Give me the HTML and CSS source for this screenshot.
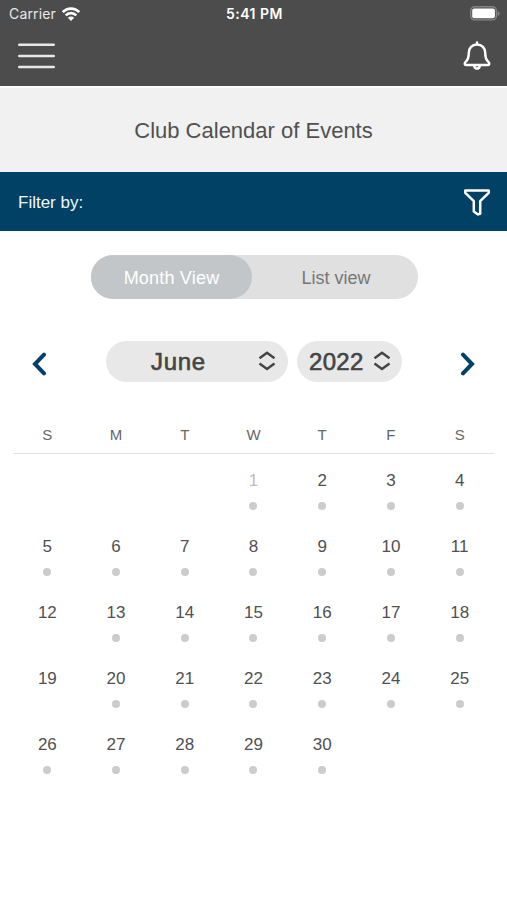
FILE: index.html
```html
<!DOCTYPE html>
<html lang="en">
<head>
<meta charset="utf-8">
<title>Club Calendar of Events</title>
<link rel="stylesheet" href="styles.css">
</head>
<body>
<header class="top">
  <div class="status">
    <div class="carrier"><span class="carrier-name">Carrier</span>
      <svg width="18" height="14" viewBox="0 0 18 14" fill="none" stroke="#fff" stroke-width="2.7"><path d="M.8 5.200C5.300.4 12.700.4 17.200 5.200M3.700 8.400c3-3 7.600-3 10.600 0"/><path d="M9 14 5.900 10.700c1.800-1.600 4.400-1.600 6.200 0z" fill="#fff" stroke="none"/></svg>
    </div>
    <div class="time">5:41 PM</div>
    <div class="battery">
      <svg width="31" height="15" viewBox="0 0 31 15"><rect x="1.700" y=".7" width="25.700" height="13.200" rx="4" fill="none" stroke="#858585" stroke-width="1.400"/><rect x="3.200" y="2.400" width="22.700" height="9.800" rx="2" fill="#fff"/><path d="M28.700 5v5q2-1 2-2.500T28.700 5z" fill="#858585"/></svg>
    </div>
  </div>
  <div class="nav">
    <svg width="37" height="28" viewBox="0 0 37 28" stroke="#e8e8e8" stroke-width="2.600" stroke-linecap="round"><path d="M1.300 2.800h34.400M1.300 14h34.400M1.300 25h34.400"/></svg>
    <svg width="28" height="30" viewBox="0 0 28 30" fill="none" stroke="#fff" stroke-width="2.500" stroke-linejoin="round" stroke-linecap="round"><path d="M14 1.400v2M14 3.400c-5 0-8.200 3.600-8.200 8.300 0 5.400-1 7.300-3.200 9.200-1.500 1.500-1 3.200.9 3.200h21c1.900 0 2.400-1.700.9-3.200-2.200-1.900-3.200-3.800-3.200-9.200 0-4.700-3.200-8.300-8.200-8.300zM11.200 24.600c.3 4 5.300 4 5.600 0"/></svg>
  </div>
</header>
<h1 class="title">Club Calendar of Events</h1>
<div class="filter">
  <span class="filter-label">Filter by:</span>
  <svg width="26" height="27" viewBox="0 0 26 27" fill="none" stroke="#fff" stroke-width="2.500" stroke-linejoin="round"><path d="M1.300 1.500h23.400v2.300l-8.500 8.400v12.600l-2.200.6-4.200-3V12.200L1.300 3.800z"/></svg>
</div>
<main>
  <div class="tabs"><div class="tab active">Month View</div><div class="tab">List view</div></div>
  <div class="picker">
    <svg class="arrow" width="16" height="24" viewBox="0 0 16 24"><path d="M13 2.600 4 12l9 9.400"/></svg>
    <div class="select month"><span class="value">June</span><svg class="updown" width="18" height="20" viewBox="0 0 18 20"><path d="m1.500 7.200 7.500-5.400 7.500 5.400M1.500 12.500 9 17.900l7.500-5.400"/></svg></div>
    <div class="select year"><span class="value">2022</span><svg class="updown" width="18" height="20" viewBox="0 0 18 20"><path d="m1.500 7.200 7.500-5.400 7.500 5.400M1.500 12.500 9 17.900l7.500-5.400"/></svg></div>
    <svg class="arrow next" width="16" height="24" viewBox="0 0 16 24"><path d="M3 2.600 12 12l-9 9.400"/></svg>
  </div>
  <div class="weekdays"><span>S</span><span>M</span><span>T</span><span>W</span><span>T</span><span>F</span><span>S</span></div>
  <div class="days">
    <div class="day past first event">1</div><div class="day event">2</div><div class="day event">3</div><div class="day event">4</div>
    <div class="day event">5</div><div class="day event">6</div><div class="day event">7</div><div class="day event">8</div><div class="day event">9</div><div class="day event">10</div><div class="day event">11</div>
    <div class="day">12</div><div class="day event">13</div><div class="day event">14</div><div class="day event">15</div><div class="day event">16</div><div class="day event">17</div><div class="day event">18</div>
    <div class="day">19</div><div class="day event">20</div><div class="day event">21</div><div class="day event">22</div><div class="day event">23</div><div class="day event">24</div><div class="day event">25</div>
    <div class="day event">26</div><div class="day event">27</div><div class="day event">28</div><div class="day event">29</div><div class="day event">30</div>
  </div>
</main>
</body>
</html>
```
FILE: styles.css
```css
* { box-sizing: border-box; }
body { margin: 0; background: #fff; color: #505050; font-family: "Liberation Sans", Arial, sans-serif; }
svg { display: block; flex: none; }
.top { height: 86px; background: #4c4c4c; color: #fff; }
.status { height: 27px; display: grid; grid-template-columns: 1fr auto 1fr; align-items: center; padding: 0 7px 0 9px; font: 14px/27px Inter, sans-serif; }
.carrier { display: flex; align-items: center; gap: 6px; color: #e8e8e8; }
.carrier-name { letter-spacing: .15px; }
.time { font-weight: 600; letter-spacing: .5px; }
.battery { display: flex; justify-content: flex-end; }
.nav { display: flex; justify-content: space-between; align-items: center; height: 57px; padding: 0 16px 0 18px; }
.title { margin: 0; height: 86px; border-top: 2px solid #fcfcfc; background: #f1f1f1; font-size: 22px; line-height: 86px; font-weight: 400; text-align: center; }
.filter { height: 59px; display: flex; justify-content: space-between; align-items: center; padding: 2px 17px 0 18px; background: #004165; color: #f2f6f8; font-size: 17px; }
.tabs { width: 327px; height: 44px; margin: 24px auto 0 91px; display: grid; grid-template-columns: 161px 166px; grid-template-rows: 44px; border-radius: 22px; background: #e0e0e0; color: #777; font-size: 18px; line-height: 46px; text-align: center; }
.tab { padding-left: 2px; }
.active { padding-left: 0; background: #c2c6c9; color: #fff; border-radius: 22px; letter-spacing: .2px; }
.picker { display: flex; align-items: center; height: 42px; margin-top: 41px; padding: 0 31px; }
.arrow { fill: none; stroke: #00416a; stroke-width: 4; stroke-linecap: round; margin-top: 5px; }
.next { margin-left: auto; }
.select { display: flex; align-items: center; height: 41px; border-radius: 21px; background: #e8e8e8; color: #444; }
.month { width: 182px; margin-left: 59px; padding: 0 12px 0 45px; justify-content: space-between; }
.year { width: 105px; margin-left: 9px; padding: 0 11px 0 12px; justify-content: space-between; }
.value { font-size: 24px; -webkit-text-stroke: .6px #444; letter-spacing: .3px; padding-top: 2px; }
.month .value { letter-spacing: .7px; }
.updown { fill: none; stroke: #444; stroke-width: 2.5; }
.weekdays { display: grid; grid-template-columns: repeat(7, 1fr); margin: 42px 13px 0; padding-bottom: 9px; height: 30px; border-bottom: 1px solid #e2e2e2; font-size: 15px; line-height: 21px; text-align: center; color: #666; }
.days { display: grid; grid-template-columns: repeat(7, 1fr); grid-auto-rows: 66px; margin: 0 13px; padding-top: 17px; }
.day { display: flex; flex-direction: column; align-items: center; gap: 11px; font-size: 17px; line-height: 20px; }
.event::after { content: ""; width: 8px; height: 8px; border-radius: 50%; background: #ccc; }
.first { grid-column: 4; }
.past { color: #bcbcbc; }
```
